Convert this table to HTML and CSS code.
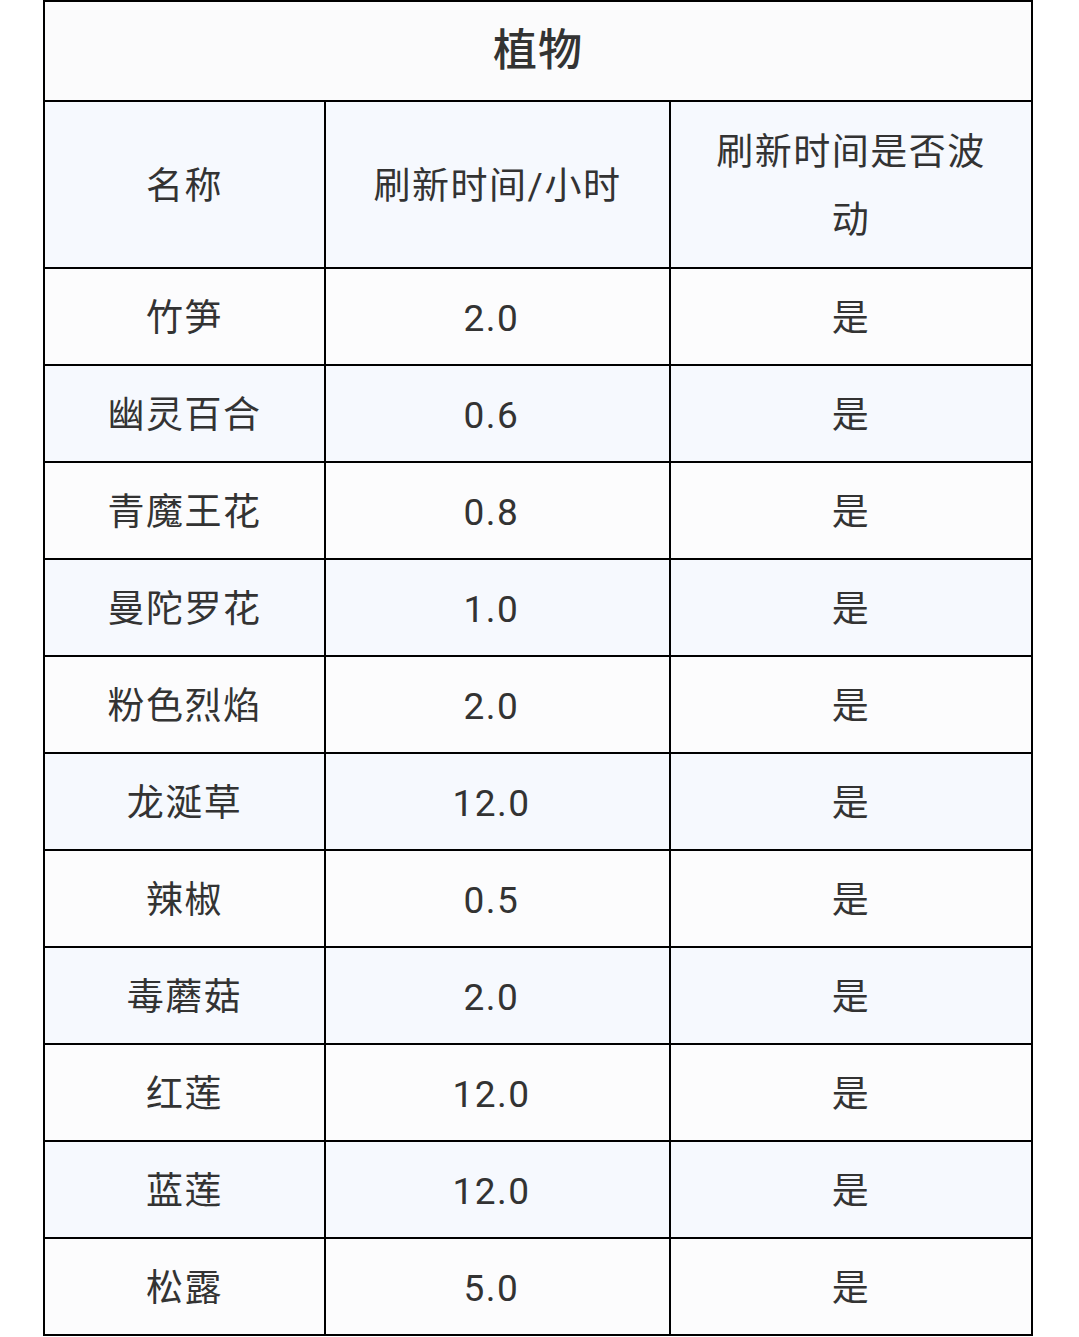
FILE: index.html
```html
<!DOCTYPE html>
<html lang="zh-CN">
<head>
<meta charset="utf-8">
<title>植物</title>
<link rel="stylesheet" href="styles.css">
</head>
<body>
<table class="plant-table">
  <colgroup>
    <col class="col-name">
    <col class="col-time">
    <col class="col-flag">
  </colgroup>
  <thead>
    <tr class="title-row"><th colspan="3" class="title">植物</th></tr>
    <tr class="head-row">
      <th>名称</th>
      <th>刷新时间/小时</th>
      <th>刷新时间是否波动</th>
    </tr>
  </thead>
  <tbody>
    <tr><td>竹笋</td><td class="num">2.0</td><td>是</td></tr>
    <tr><td>幽灵百合</td><td class="num">0.6</td><td>是</td></tr>
    <tr><td>青魔王花</td><td class="num">0.8</td><td>是</td></tr>
    <tr><td>曼陀罗花</td><td class="num">1.0</td><td>是</td></tr>
    <tr><td>粉色烈焰</td><td class="num">2.0</td><td>是</td></tr>
    <tr><td>龙涎草</td><td class="num">12.0</td><td>是</td></tr>
    <tr><td>辣椒</td><td class="num">0.5</td><td>是</td></tr>
    <tr><td>毒蘑菇</td><td class="num">2.0</td><td>是</td></tr>
    <tr><td>红莲</td><td class="num">12.0</td><td>是</td></tr>
    <tr><td>蓝莲</td><td class="num">12.0</td><td>是</td></tr>
    <tr><td>松露</td><td class="num">5.0</td><td>是</td></tr>
  </tbody>
</table>
</body>
</html>
```

FILE: styles.css
```css
html, body {
  margin: 0;
  padding: 0;
  background: #ffffff;
}

body {
  font-family: "Roboto", "Noto Sans CJK SC", sans-serif;
  color: #333333;
}

.plant-table {
  margin-left: 43px;
  width: 990px;
  border-collapse: collapse;
  table-layout: fixed;
  border: 2px solid #000;
}

.col-name { width: 281px; }
.col-time { width: 345px; }
.col-flag { width: 362px; }

.plant-table th,
.plant-table td {
  border: 2px solid #000;
  padding: 5px 30px 0;
  text-align: center;
  vertical-align: middle;
  font-size: 37px;
  font-weight: 400;
  letter-spacing: 1.5px;
  line-height: 68px;
  background: #fcfcfd;
}

.plant-table td.num {
  padding-left: 30px;
  padding-right: 42px;
}

.plant-table th.title {
  padding-top: 0;
  font-size: 44px;
  font-weight: 500;
  letter-spacing: 1px;
  background: #fbfbfc;
}

.title-row { height: 100px; }
.head-row { height: 167px; }
.plant-table tbody tr { height: 97px; }

.head-row th,
.plant-table tbody tr:nth-child(even) td {
  background: #f6f9fe;
}
```
